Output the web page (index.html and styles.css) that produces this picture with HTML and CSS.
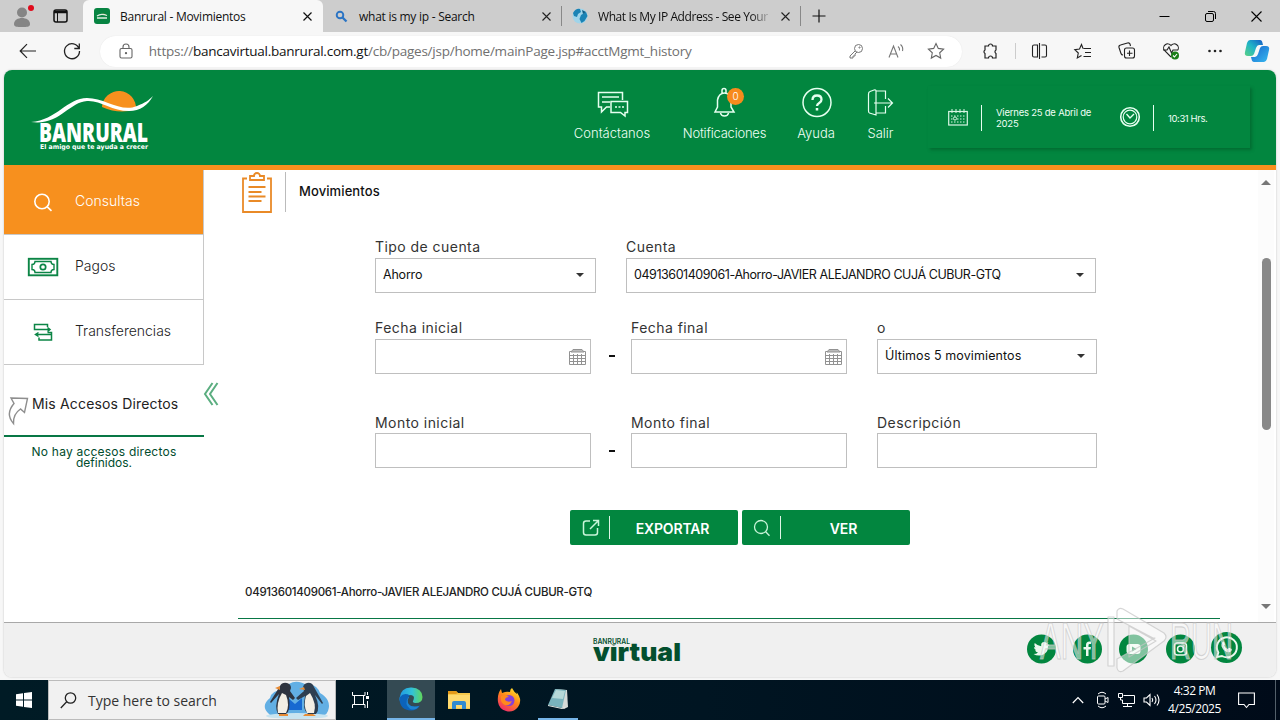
FILE: index.html
```html
<!DOCTYPE html>
<html lang="es">
<head>
    <meta charset="UTF-8">
    <meta name="viewport" content="width=device-width, initial-scale=1.0">
    <title>Banrural - Movimientos</title>
    <link rel="stylesheet" href="styles.css">
</head>
<body>

<!-- tabs -->
<div class="tab-strip">
    <div class="strip-tools">
        <svg width="24" height="26" viewBox="0 0 24 26"><circle cx="12" cy="9.500" r="5" fill="#858585"/><path d="M4 21c0-8 16-8 16 0 0 3-3 3-8 3s-8 0-8-3z" fill="#858585"/><circle cx="21" cy="5" r="3" fill="#e00b1c"/></svg>
        <svg class="work-icon" width="15" height="14" viewBox="0 0 15 14" fill="none" stroke="#111"><rect x="1" y="1" width="13" height="12" rx="2" stroke-width="1.500"/><path d="M1 3h13" stroke-width="2.500"/><path d="M4.500 3v10"/></svg>
    </div>
    <div class="tab active">
        <svg class="favicon" width="16" height="16" viewBox="0 0 16 16"><rect width="16" height="16" rx="3" fill="#078442"/><path d="M7 7a3 3 0 0 1 5 0z" fill="#f7901e"/><path d="M3 8q4-3 10-.5M3 10h10" stroke="#dfeee2" stroke-width="1.300" fill="none"/></svg>
        <span class="tab-title t1">Banrural - Movimientos</span>
        <svg class="tab-close" width="9" height="9" viewBox="0 0 9 9"><path d="M.5.500l8 8M8.500.500l-8 8" stroke="#111" stroke-width="1.200"/></svg>
    </div>
    <div class="tab">
        <svg class="favicon" width="16" height="16" viewBox="0 0 16 16" fill="none" stroke="#2b74c4"><circle cx="7" cy="7" r="3.300" stroke-width="1.900"/><path d="M9.500 9.500l4 4" stroke-width="2.300"/></svg>
        <span class="tab-title t2">what is my ip - Search</span>
        <svg class="tab-close" width="9" height="9" viewBox="0 0 9 9"><path d="M.5.500l8 8M8.500.500l-8 8" stroke="#222" stroke-width="1.100"/></svg>
    </div>
    <div class="tab">
        <svg class="favicon" width="16" height="16" viewBox="0 0 16 16"><circle cx="8" cy="8" r="7.500" fill="#9fd4ea"/><path d="M1 5q3-5 7-4l1 3-3 2-1 3-3-1zM9 7l5-3 1.500 4-3 5-3 2-2-4z" fill="#1b83b5"/><path d="M10 2l4 2-3 2z" fill="#0f5d86"/></svg>
        <span class="tab-title t3">What Is My IP Address - See Your</span>
        <svg class="tab-close" width="9" height="9" viewBox="0 0 9 9"><path d="M.5.500l8 8M8.500.500l-8 8" stroke="#222" stroke-width="1.100"/></svg>
    </div>
    <svg class="new-tab" width="14" height="14" viewBox="0 0 14 14"><path d="M7 .5v13M.5 7h13" stroke="#111" stroke-width="1.200"/></svg>
    <div class="window-buttons">
        <svg width="11" height="11" viewBox="0 0 11 11"><path d="M.5 5.500h10" stroke="#000"/></svg>
        <svg width="11" height="11" viewBox="0 0 11 11" fill="none" stroke="#000"><rect x=".5" y="2.500" width="8" height="8" rx="1.500"/><path d="M3 .5h5.500q2 0 2 2V8"/></svg>
        <svg width="11" height="11" viewBox="0 0 11 11"><path d="M.5.500l10 10M10.500.500l-10 10" stroke="#000" stroke-width="1.100"/></svg>
    </div>
</div>

<!-- address bar -->
<div class="toolbar">
    <div class="nav-buttons">
        <svg width="18" height="16" viewBox="0 0 18 16" fill="none" stroke="#222" stroke-width="1.200"><path d="M17 8H1.500M8 1.200L1.200 8 8 14.800"/></svg>
        <svg width="18" height="18" viewBox="0 0 18 18" fill="none" stroke="#222" stroke-width="1.300"><path d="M16 6.500A7.500 7.500 0 1 0 16.500 9M16.300 1.500v5h-5"/></svg>
    </div>
    <div class="address">
        <svg class="lock" width="14" height="16" viewBox="0 0 14 16" fill="none" stroke="#666" stroke-width="1.100"><rect x="1" y="5.500" width="12" height="9.500" rx="1.500"/><path d="M4 5.500V4a3 3 0 0 1 6 0v1.500"/><circle cx="7" cy="10.200" r=".6" fill="#666"/></svg>
        <span class="url">https://<b>bancavirtual.banrural.com.gt</b>/cb/pages/jsp/home/mainPage.jsp#acctMgmt_history</span>
        <div class="address-icons">
            <svg width="16" height="16" viewBox="0 0 16 16" fill="none" stroke="#777"><circle cx="10.500" cy="5.500" r="4"/><circle cx="11.500" cy="4.500" r=".6"/><path d="M7 8l-5 5v2h3v-2h2v-2l2-2"/></svg>
            <svg width="16" height="16" viewBox="0 0 16 16" fill="none" stroke="#777" stroke-width="1.100"><path d="M1 14.500L5.500 3 10 14.500M2.500 11h6M10 3.500q2 1.500 1.500 4M12.500 1.500q3 2.500 2 6.500"/></svg>
            <svg width="18" height="18" viewBox="0 0 18 18" fill="none" stroke="#666" stroke-width="1.100"><path d="M9 1.500l2.300 4.900 5.300.7-3.900 3.700 1 5.300L9 13.500l-4.700 2.600 1-5.300-3.900-3.700 5.300-.7z"/></svg>
        </div>
    </div>
    <svg class="ext" width="17" height="17" viewBox="0 0 17 17" fill="none" stroke="#222" stroke-width="1.200"><path d="M3 3h3.500a2 2 0 0 1 4 0H14v4a2 2 0 0 0 0 3.500V15h-3.500a2 2 0 0 0-4 0H3v-4.500a2 2 0 0 1 0-3.500z"/></svg>
    <div class="toolbar-sep"></div>
    <div class="toolbar-icons">
        <svg width="17" height="16" viewBox="0 0 17 16" fill="none" stroke="#222" stroke-width="1.100"><path d="M6.500 2H3Q1.500 2 1.500 3.500v9Q1.500 14 3 14h3.500zM8.500 0v16M10.500 2H14q1.500 0 1.500 1.500v9q0 1.500-1.500 1.500h-3.500"/></svg>
        <svg width="18" height="17" viewBox="0 0 18 17" fill="none" stroke="#222" stroke-width="1.100"><path d="M9 5.500L7.500 1.500l-2 4.500-4.700.6 3.500 3.400-1 5 4.200-2.500M9.500 5.500H17M11 9.500h6M9.500 13.500H17"/></svg>
        <svg width="18" height="18" viewBox="0 0 18 18" fill="none" stroke="#222" stroke-width="1.100"><rect x="6.500" y="6" width="10" height="10" rx="2"/><path d="M11.500 8.500v5.500M9 11.200h5.500M5 13q-1.500 0-2-1.500l-2-6Q.5 3.500 2.500 3l7-2q2-.5 2.500 1l.5 2"/></svg>
        <svg width="18" height="18" viewBox="0 0 18 18" fill="none" stroke="#222" stroke-width="1.100"><path d="M9 15L2.500 8.500a4 4 0 0 1 6.500-5 4 4 0 0 1 6.500 5M1 8h4l2-3 2.500 6L11 8h5"/><circle cx="13" cy="13.500" r="4" fill="#1b7d18" stroke="none"/><path d="M11 13.500l1.500 1.500 2.500-3" stroke="#fff"/></svg>
        <svg width="16" height="6" viewBox="0 0 16 6" fill="#222"><circle cx="2.500" cy="3" r="1.300"/><circle cx="8" cy="3" r="1.300"/><circle cx="13.500" cy="3" r="1.300"/></svg>
        <svg width="26" height="24" viewBox="0 0 26 24"><defs><linearGradient id="cpA" x1="0" y1="1" x2="1" y2="0"><stop offset="0" stop-color="#5ad184"/><stop offset=".5" stop-color="#20b4c7"/><stop offset="1" stop-color="#1659c5"/></linearGradient><linearGradient id="cpB" x1="0" y1="0" x2="1" y2="1"><stop offset="0" stop-color="#1863cc"/><stop offset="1" stop-color="#37baf0"/></linearGradient></defs><path d="M6 1h10q2 0 2.500 3L19 6h-4q-2 0-3 3l-2 6q-1 2-3 2H4q-4 0-3-4L3 4q1-3 3-3z" fill="url(#cpA)"/><path d="M20 23H10q-2 0-2.500-3L7 18h4q2 0 3-3l2-6q1-2 3-2h3q4 0 3 4l-2 9q-1 3-3 3z" fill="url(#cpB)"/></svg>
    </div>
</div>

<!-- page -->
<div class="page">
    <header class="header">
        <svg class="brand" width="124" height="65" viewBox="0 0 124 65">
            <path d="M71 19a17 17 0 0 1 34 2q-16 6-34-2z" fill="#f7901e"/>
            <path d="M0 34C26 32 36 10 56 10c18 0 34 15 50 8 8-3 12-6 16-10-5 9-13 15-24 15-17 0-29-11-42-10C38 14 28 38 0 34z" fill="#fff"/>
            <text class="brand-name" x="8" y="54" textLength="109" lengthAdjust="spacingAndGlyphs">BANRURAL</text>
            <text class="brand-slogan" x="9" y="61" textLength="108" lengthAdjust="spacingAndGlyphs">El amigo que te ayuda a crecer</text>
        </svg>
        <nav class="top-nav">
            <a class="nav-contact">
                <svg width="32" height="32" viewBox="0 0 32 32" fill="none" stroke="#e6fff0" stroke-width="1.500"><path d="M13 20H9.500l-5 5v-5H1.500V5.500h24V13M5 10h17M5 15h8"/><path d="M14 14.500h16.500v11H28v3.500l-4.500-3.500H14z"/><path d="M18 20h2M21.500 20h2M25 20h2"/></svg>
                <span>Contáctanos</span>
            </a>
            <a class="nav-notif">
                <svg width="28" height="32" viewBox="0 0 28 32" fill="none" stroke="#e6fff0" stroke-width="1.500"><path d="M11 6V3.500a2 2 0 0 1 4 0V6M4 25h19l-3-5v-7q-1-7-6.500-7T6.500 13v7zM9.500 26q.5 3 4 3t4-3"/></svg>
                <span>Notificaciones</span>
                <i class="notif-count">0</i>
            </a>
            <a class="nav-help">
                <svg width="32" height="32" viewBox="0 0 32 32" fill="none" stroke="#e6fff0"><circle cx="16" cy="15.500" r="14" stroke-width="1.500"/><path d="M11.500 13q0-4.500 4.500-4.500t4.500 4q0 2-2 3.200-2.500 1.500-2.500 3.300" stroke-width="2.300"/><path d="M16 21v2.500" stroke-width="2.500"/></svg>
                <span>Ayuda</span>
            </a>
            <a class="nav-exit">
                <svg width="28" height="32" viewBox="0 0 28 32" fill="none" stroke="#e6fff0" stroke-width="1.200"><path d="M9 4h9.500v8M18.500 19v7H9M9 4v24L2.500 26Q1.500 25.500 1.500 24V7q0-2 1.500-2.500L7 3q2-.5 2 1zM7 16h18.500M21 11.500l4.500 4.500-4.500 4.500"/></svg>
                <span>Salir</span>
            </a>
        </nav>
        <div class="date-box">
            <svg width="20" height="17" viewBox="0 0 20 17" fill="none" stroke="#d9f6e4"><rect x=".7" y="2.500" width="18.600" height="13.500" stroke-width="1.200"/><path d="M4 0v4M8 0v4M12 0v4M16 0v4"/><path d="M3 7h14M3 10h14M3 13h14" stroke-dasharray="1.500 1.500"/><circle cx="7" cy="9.500" r="1.600" fill="#02863f"/></svg>
            <div class="date-sep"></div>
            <div class="date-text">Viernes 25 de Abril de<br>2025</div>
            <svg class="clock" width="22" height="22" viewBox="0 0 22 22" fill="none" stroke="#e6fff0"><circle cx="11" cy="11" r="9.300" stroke-width="1.600"/><circle cx="11" cy="11" r="6.800" stroke-width="1.200"/><path d="M7.500 8l3.500 4 4-4" stroke-width="1.400"/></svg>
            <div class="date-sep"></div>
            <div class="time-text">10:31 Hrs.</div>
        </div>
    </header>

    <div class="main">
        <aside class="sidebar">
            <div class="menu-item selected">
                <svg width="40" height="24" viewBox="0 0 40 24" fill="none" stroke="#fff" stroke-width="1.600"><circle cx="19" cy="11.500" r="7.200"/><path d="M24.300 16.800l4.200 4"/></svg>
                <span>Consultas</span>
            </div>
            <div class="menu-item">
                <svg width="40" height="24" viewBox="0 0 40 24" fill="none" stroke="#0c8546"><rect x="5.800" y="3.800" width="28.500" height="16.500" stroke-width="1.900"/><path d="M12 6.500h16q0 3 3 3v5q-3 0-3 3H12q0-3-3-3v-5q3 0 3-3z" stroke-width="1.400"/><circle cx="20" cy="12" r="2.700" stroke-width="1.700"/></svg>
                <span>Pagos</span>
            </div>
            <div class="menu-item">
                <svg width="40" height="24" viewBox="0 0 40 24" fill="none" stroke="#0c8546" stroke-width="1.500"><path d="M15 9.500H11.500V4.500h13v2.500M15 9.500h12M24.500 7.500l2.500 2-2.500 2M24.500 12.500H28.500v7.500H16v-2.500M28 14.500H12.500M15.500 12.500l-3 2 3 2"/></svg>
                <span>Transferencias</span>
            </div>
            <div class="shortcuts">
                <svg width="23" height="29" viewBox="0 0 23 29" fill="none" stroke="#8e8e8e" stroke-width="1.400"><path d="M4 2l16.500.5-3 14-4-3.500Q6 18 6.500 27.500-2 18 7 7.500z"/></svg>
                <span>Mis Accesos Directos</span>
            </div>
            <p class="no-shortcuts"><span>No hay accesos directos</span><br>definidos.</p>
        </aside>
        <div class="collapse">
            <svg width="16" height="24" viewBox="0 0 16 24" fill="none" stroke="#5bae80" stroke-width="2"><path d="M8.500 1L1 12l7.500 11M13.500 1L6 12l7.500 11"/></svg>
        </div>

        <section class="content">
            <div class="title-row">
                <svg width="30" height="42" viewBox="0 0 30 42" fill="none" stroke="#e98a27" stroke-width="1.800"><path d="M5 6.500H1v33.500h28V6.500h-4"/><path d="M8 8h14V4h-4a3 3 0 0 0-6 0H8zM6.500 15h17M6.500 20h13M6.500 24.500h17M6.500 29h13"/></svg>
                <h1>Movimientos</h1>
            </div>

            <div class="filters">
                <div class="row">
                    <div class="field type"><label>Tipo de cuenta</label><div class="box select"><span class="v1">Ahorro</span></div></div>
                    <div class="field account"><label>Cuenta</label><div class="box select"><span class="v2">04913601409061-Ahorro-JAVIER ALEJANDRO CUJÁ CUBUR-GTQ</span></div></div>
                </div>
                <div class="row dates">
                    <div class="field half"><label>Fecha inicial</label><div class="box"><svg class="cal" width="17" height="18" viewBox="0 0 17 18" fill="none" stroke="#929292"><path d="M.5 3.500h16v13H.5zM.5 7.500h16M.5 10.500h16M.5 13.500h16M4.500 6v10.500M8.500 6v10.500M12.500 6v10.500"/><path d="M4 1.500h9L15 4H2z" fill="#bbb"/></svg></div></div>
                    <div class="dash"></div>
                    <div class="field half"><label>Fecha final</label><div class="box"><svg class="cal" width="17" height="18" viewBox="0 0 17 18" fill="none" stroke="#929292"><path d="M.5 3.500h16v13H.5zM.5 7.500h16M.5 10.500h16M.5 13.500h16M4.500 6v10.500M8.500 6v10.500M12.500 6v10.500"/><path d="M4 1.500h9L15 4H2z" fill="#bbb"/></svg></div></div>
                    <div class="field last"><label>o</label><div class="box select"><span class="v3">Últimos 5 movimientos</span></div></div>
                </div>
                <div class="row amounts">
                    <div class="field half"><label>Monto inicial</label><div class="box"></div></div>
                    <div class="dash"></div>
                    <div class="field half"><label>Monto final</label><div class="box"></div></div>
                    <div class="field last"><label>Descripción</label><div class="box"></div></div>
                </div>
            </div>

            <div class="buttons">
                <button class="btn">
                    <svg width="18" height="18" viewBox="0 0 18 18" fill="none" stroke="#c9f5d9" stroke-width="1.500"><path d="M8 2H4Q1.500 2 1.500 4.500v9Q1.500 16 4 16h9q2.500 0 2.500-2.500V9M8 10l8-8M11 1.500h5.500V7"/></svg>
                    <span class="btn-text">EXPORTAR</span>
                </button>
                <button class="btn">
                    <svg width="18" height="18" viewBox="0 0 18 18" fill="none" stroke="#c9f5d9" stroke-width="1.300"><circle cx="8" cy="8" r="6.500"/><path d="M12.700 12.700l3.800 4"/></svg>
                    <span class="btn-text">VER</span>
                </button>
            </div>

            <h2 class="account-title">04913601409061-Ahorro-JAVIER ALEJANDRO CUJÁ CUBUR-GTQ</h2>
        </section>

        <div class="scrollbar">
            <div class="arrow-up"></div>
            <div class="thumb"></div>
            <div class="arrow-down"></div>
        </div>
    </div>

    <footer class="footer">
        <svg class="virtual" width="90" height="34" viewBox="0 0 90 34" fill="#034f2e"><text class="virtual-name" x="1" y="24" textLength="88" lengthAdjust="spacingAndGlyphs">virtual</text><path d="M0 0h38.500v7.500H0z" fill="#f0f0f0"/><text class="virtual-top" x="1" y="6.500" textLength="37" lengthAdjust="spacingAndGlyphs">BANRURAL</text></svg>
        <div class="social">
            <svg width="31" height="32" viewBox="0 0 31 32"><circle cx="15.500" cy="17" r="14.500" fill="#02863f"/><path d="M23.500 13q-1 .8-1.500 1 .3 8-7.500 9.500-4 .5-7-1.500 3 0 4.500-1.500-2.300-.4-3-2.300h1.300Q8 17.300 8 15l1.400.4Q7.500 13.500 8.700 11q3 3 6.500 3.200-.5-4.200 3-4.200 1.300 0 2.300 1l2-.7-1.200 1.700z" fill="#ecf8ef"/></svg>
            <svg width="31" height="32" viewBox="0 0 31 32"><circle cx="15.500" cy="17" r="14.500" fill="#02863f"/><path d="M14 24v-6.500h-2.500V15H14v-2q0-3.500 3.500-3.500H19v2.500h-1.300q-1.200 0-1.200 1.300V15H19l-.4 2.500h-2.100V24z" fill="#ecf8ef"/></svg>
            <svg width="31" height="32" viewBox="0 0 31 32"><circle cx="15.500" cy="17" r="14.500" fill="#02863f"/><rect x="8.500" y="12" width="14" height="10" rx="3" fill="#ecf8ef"/><path d="M14 14.500l4.500 2.500-4.500 2.500z" fill="#02863f"/></svg>
            <svg width="31" height="32" viewBox="0 0 31 32" fill="none" stroke="#ecf8ef" stroke-width="1.500"><circle cx="15.500" cy="17" r="14.500" fill="#02863f" stroke="none"/><rect x="9.500" y="11" width="12" height="12" rx="3"/><circle cx="15.500" cy="17" r="3"/><path d="M18.500 13.500h1"/></svg>
            <svg width="31" height="32" viewBox="0 0 31 32"><circle cx="15.500" cy="15.500" r="15.500" fill="#02863f"/><path d="M6 25l1.300-4.600A10 10 0 1 1 11 24z" fill="none" stroke="#ecf8ef" stroke-width="2"/><path d="M11.500 10q1.200-1 2 .5l.7 1.800-1 1.400q1.200 2.300 3.500 3.300l1.400-1.300 2.600 1.300q.3 3-3 3.300-5-.6-7.200-6-.4-2.600 1-4.300z" fill="#ecf8ef"/></svg>
        </div>
    </footer>
</div>

<svg class="watermark" width="200" height="68" viewBox="0 0 200 68">
    <g fill="#fff" fill-opacity=".5" stroke="#c4c4c4" stroke-opacity=".7" stroke-width="1.200">
        <text x="2" y="52" textLength="64" lengthAdjust="spacingAndGlyphs">ANY</text>
        <text x="132" y="52" textLength="63" lengthAdjust="spacingAndGlyphs">RUN</text>
        <path d="M70 10h6v49h-6zM79 4q2-4 6-2l41 24q4 4 0 8L85 64q-5 2-6-3V52l38-21-2 0-36-19zM91 19l27 15-27 16z" stroke-linejoin="round"/>
    </g>
</svg>

<!-- taskbar -->
<div class="taskbar">
    <div class="start">
        <svg width="16" height="16" viewBox="0 0 16 16" fill="#fff"><path d="M0 2.200l7-1v6.300H0zM8 1l8-1v7.500H8zM0 8.500h7v6.300l-7-1zM8 8.500h8V16l-8-1z"/></svg>
    </div>
    <div class="search">
        <svg width="17" height="17" viewBox="0 0 17 17" fill="none" stroke="#222" stroke-width="1.300"><circle cx="10.500" cy="6" r="5.200"/><path d="M6.700 9.800L.8 16"/></svg>
        <span>Type here to search</span>
        <svg class="penguins" width="68" height="38" viewBox="0 0 68 38">
            <path d="M6 33Q-3 25 7 17q2-8 13-8Q30-5 45 5q8-3 12 7 12 7 8 18-2 6-12 6H13q-5 0-7-3z" fill="#62afe4"/>
            <ellipse cx="34" cy="35" rx="31" ry="3" fill="#c8e4f0"/>
            <path d="M25 17l7 6 7-6v12H25z" fill="#1769d1"/>
            <path d="M17 5q2-4 7-3 4 1 4 5l-1 3 5 7-2 2-4-3q2 14-3 17h-8q-4-7 1-20l-8 9-1-1z" fill="#2e3440"/>
            <path d="M19 12l4 2q4 10 0 18h-8q-2-10 4-20z" fill="#f3eee4"/>
            <path d="M51 6q-2-5-7-4-4 1-4 5l1 3-8 7 2 2 7-4q-3 14 3 18h8q5-6-1-19l7 9 1-1z" fill="#2e3e50"/>
            <path d="M47 12l-4 3q-3 9 1 17h7q3-9-4-20z" fill="#f3eee4"/>
            <path d="M17 5l-5 2 5 2zM16 33h9v2h-9zM42 33h8l3 2H40zM41 6l-5 2 6 1z" fill="#e78b34"/>
        </svg>
    </div>
    <div class="task-cell view">
        <svg width="18" height="16" viewBox="0 0 18 16" fill="none" stroke="#fff"><path d="M2.500 3.500h9v9h-9zM.5 0v3.500h12.500V0M.5 16v-3.500h12.500V16M15.500 0v3M15.500 9v7"/><path d="M14 4h3v3h-3z" fill="#fff" stroke="none"/></svg>
    </div>
    <div class="task-cell edge">
        <svg width="24" height="24" viewBox="0 0 24 24"><defs><linearGradient id="edgeA"><stop offset="0" stop-color="#209ae4"/><stop offset=".55" stop-color="#32c2d7"/><stop offset="1" stop-color="#61d75a"/></linearGradient></defs><path d="M.5 11Q2 0 12.500.500 23 1 23.500 10q0 6-7 6-4-.5-2-3 2-5-4-5Q2 8 .5 14z" fill="url(#edgeA)"/><path d="M1 10q4-5 10-1.500Q6 12 9.500 17q4 4.500 11.500 1.500-3 5-9 5Q1 23 .5 12z" fill="#0c63ba"/><path d="M9 10q-4 7 2 12 6 2 9-3-9 2-11-3-1-3 1-6z" fill="#1d83d2"/></svg>
    </div>
    <div class="task-cell folder">
        <svg width="22" height="20" viewBox="0 0 22 20"><path d="M0 1h8l2 2h12v16H0z" fill="#f7c94c"/><path d="M0 1h8l2 2-2 1H0z" fill="#e49a19"/><path d="M0 5h22v13H0z" fill="#ffda6e"/><path d="M4 19v-6q0-2 2-2h10q2 0 2 2v6h-4v-4H8v4z" fill="#318bd0"/></svg>
    </div>
    <div class="task-cell firefox">
        <svg width="24" height="24" viewBox="0 0 24 24"><defs><linearGradient id="ffA" x1=".8" y1="0" x2=".2" y2="1"><stop offset="0" stop-color="#ffe32e"/><stop offset=".45" stop-color="#ff8818"/><stop offset="1" stop-color="#f02471"/></linearGradient></defs><path d="M1 14Q0 6 4 1l1 4 3-1q2-.5 5 0 0-3 2-4 2 4 5 6 0-1-.5-2Q26 12 21 19q-5 6-12 4-7-2-8-9z" fill="url(#ffA)"/><circle cx="12" cy="12.500" r="5.500" fill="#8540d8"/><path d="M4 8q5-2 8 1-4 0-4 3 3 3 7 1-2 5-7 4-5-2-4-9z" fill="#ff8a1c"/></svg>
    </div>
    <div class="task-cell notes">
        <svg width="24" height="24" viewBox="0 0 24 24"><path d="M9 2l12 1 1 17-4 2-3-2z" fill="#d5dad7"/><path d="M9 2l11 1-4 18-14-3z" fill="#79b3bc"/><path d="M10 3l9 1-2 8-11-1z" fill="#b6d9d8"/><path d="M2 18l14 3 3-1v1l-3 1-14-3z" fill="#e4e9e5"/></svg>
    </div>
    <div class="tray">
        <svg width="12" height="8" viewBox="0 0 12 8" fill="none" stroke="#fff" stroke-width="1.200"><path d="M.8 7L6 1.500 11.200 7"/></svg>
        <svg width="14" height="18" viewBox="0 0 14 18" fill="none" stroke="#fff"><rect x="1.500" y="5" width="7.500" height="8" rx="1"/><path d="M9 8l3-1.500v5L9 10M2 3q4-3.500 8 0M2 15q4 3.500 8 0"/></svg>
        <svg width="17" height="16" viewBox="0 0 17 16" fill="none" stroke="#fff"><path d="M5.500 3.500h11v8h-12V8M9.500 11.500v3M5 14.500h9M.5 1.500h4v4h-4zM2.500 5.500V8h2"/></svg>
        <svg width="17" height="14" viewBox="0 0 17 14" fill="none" stroke="#fff" stroke-width="1.100"><path d="M1 5h2.500L7 1.500v11L3.500 9H1zM9 5q1.500 2 0 4M11.500 3q3 4 0 8M14 1.500q4 5.500 0 11"/></svg>
    </div>
    <div class="tray-clock">4:32 PM<br>4/25/2025</div>
    <svg class="action" width="17" height="17" viewBox="0 0 17 17" fill="none" stroke="#fff" stroke-width="1.100"><path d="M.6 1h15.800v11.500H11l-2.500 3-2.500-3H.6z"/></svg>
    <div class="peek"></div>
</div>

</body>
</html>
```
FILE: styles.css
```css
* {
    box-sizing: border-box;
}

body {
    margin: 0;
    width: 1280px;
    height: 720px;
    overflow: hidden;
    background-color: #f7f7f7;
    font-family: Inter, "Liberation Sans", sans-serif;
    font-size: 13px;
    color: #222;
}

svg {
    display: block;
    flex-shrink: 0;
    overflow: visible;
}

/* browser tabs */
.tab-strip {
    height: 32px;
    display: flex;
    align-items: center;
    background-color: #cdcdcd;
    font-family: "Open Sans", "Noto Sans", sans-serif;
    font-size: 12px;
    color: #111;
}

.strip-tools {
    width: 83px;
    display: flex;
    align-items: center;
    padding-left: 10px;
}

.work-icon {
    margin-left: 19px;
}

.tab {
    width: 239px;
    height: 32px;
    display: flex;
    align-items: center;
    padding: 0 11px 0 10px;
    position: relative;
}

.tab.active {
    width: 240px;
    padding-left: 11px;
    background-color: #f7f7f7;
    border-radius: 6px 6px 0 0;
}

.tab:not(.active)::after {
    content: "";
    position: absolute;
    right: 0;
    top: 6px;
    height: 20px;
    border-right: 1px solid #888;
}

.tab-title {
    margin-left: 10px;
    letter-spacing: -0.26px;
    white-space: nowrap;
}

.t3 {
    width: 174px;
    overflow: hidden;
    letter-spacing: -0.42px;
    -webkit-mask-image: linear-gradient(90deg, #000 88%, transparent);
    mask-image: linear-gradient(90deg, #000 88%, transparent);
}

.tab-close {
    margin-left: auto;
}

.new-tab {
    margin-left: 11px;
}

.window-buttons {
    display: flex;
    gap: 35px;
    margin-left: auto;
    margin-right: 18px;
}

/* toolbar */
.toolbar {
    height: 38px;
    display: flex;
    align-items: center;
}

.nav-buttons {
    width: 100px;
    display: flex;
    align-items: center;
    gap: 26px;
    padding-left: 19px;
}

.address {
    width: 864px;
    height: 31px;
    border-radius: 16px;
    background-color: #fff;
    display: flex;
    align-items: center;
    padding: 0 5px 0 19px;
    box-shadow: 0 0 1px #ddd;
}

.url {
    margin-left: 16px;
    font-family: "Open Sans", "Noto Sans", sans-serif;
    font-size: 13.5px;
    letter-spacing: -0.24px;
    color: #707070;
    white-space: nowrap;
}

.url b {
    font-weight: 400;
    color: #111;
}

.address-icons {
    margin-left: auto;
    display: flex;
    align-items: center;
    width: 120px;
    justify-content: space-around;
}

.ext {
    margin-left: 20px;
}

.toolbar-sep {
    width: 1px;
    height: 16px;
    margin: 0 1px 0 16px;
    background-color: #ccc;
}

.toolbar-icons {
    display: flex;
    align-items: center;
    width: 264px;
}

.toolbar-icons svg {
    margin: 0 13px;
}

.toolbar-icons svg:first-child {
    margin-left: 14px;
}

.toolbar-icons svg:nth-child(5) {
    margin: 0 14px;
}

.toolbar-icons svg:last-child {
    margin: 0 0 0 7px;
}

/* page */
.page {
    margin: 0 4px;
    height: 607px;
    border-radius: 8px;
    overflow: hidden;
    background-color: #fff;
    box-shadow: 0 0 2px #bbb;
}

.header {
    height: 100px;
    display: flex;
    background-color: #02863f;
    border-bottom: 5px solid #f7901e;
    color: #effff5;
}

.brand {
    margin: 18px 0 0 27px;
}

.brand-name {
    font-family: "Open Sans", sans-serif;
    font-weight: 800;
    font-size: 26px;
    fill: #fff;
}

.brand-slogan {
    font-family: "DejaVu Sans", sans-serif;
    font-weight: 700;
    font-size: 6.5px;
    fill: #fff;
}

.top-nav {
    display: flex;
    margin-left: 413px;
    padding-top: 17px;
}

.top-nav a {
    display: flex;
    flex-direction: column;
    align-items: center;
    gap: 6px;
    font-size: 13px;
    font-weight: 300;
    line-height: 17px;
    position: relative;
}

.top-nav svg {
    margin-left: 1px;
}

.nav-contact {
    width: 88px;
}

.nav-notif {
    width: 137px;
    letter-spacing: -0.22px;
}

.nav-help {
    width: 46px;
}

.nav-exit {
    width: 82px;
    padding-left: 1px;
}

.notif-count {
    position: absolute;
    left: 71px;
    top: 1px;
    width: 17px;
    height: 17px;
    border-radius: 50%;
    background-color: #f78b1d;
    color: #fff;
    font-style: normal;
    font-size: 10px;
    text-align: center;
}

.date-box {
    width: 322px;
    height: 62px;
    margin: 16px 0 0 7px;
    padding-left: 20px;
    display: flex;
    align-items: center;
    box-shadow: 2px 2px 3px rgba(0, 60, 25, 0.35);
    font-size: 9.5px;
    line-height: 11px;
    letter-spacing: -0.22px;
    white-space: nowrap;
}

.date-sep {
    width: 1px;
    height: 26px;
    margin: 2px 14px 0 13px;
    background-color: #e6fff0;
}

.date-text {
    width: 123px;
    padding-top: 2px;
}

.clock + .date-sep {
    margin-left: 12px;
}

.time-text {
    padding-top: 2px;
    letter-spacing: -0.4px;
}

.main {
    height: 452px;
    display: flex;
}

/* sidebar */
.sidebar {
    width: 200px;
}

.menu-item {
    height: 65px;
    display: flex;
    align-items: center;
    padding-left: 20px;
    border-right: 1px solid #c8c8c8;
    border-bottom: 1px solid #c8c8c8;
    font-size: 14px;
    font-weight: 300;
    color: #222;
}

.menu-item svg {
    margin-left: -1px;
}

.menu-item span {
    margin-left: 12px;
    padding-bottom: 4px;
}

.menu-item.selected {
    background-color: #f7901e;
    color: #fff;
}

.shortcuts {
    height: 72px;
    display: flex;
    align-items: center;
    padding: 11px 0 0 3px;
    border-bottom: 2px solid #087745;
    white-space: nowrap;
    font-size: 14px;
    letter-spacing: 0.16px;
}

.shortcuts svg {
    margin-top: 9px;
}

.shortcuts span {
    margin-left: 2px;
    padding-bottom: 4px;
}

.no-shortcuts {
    margin: 9px 0 0;
    font-size: 12px;
    line-height: 11px;
    color: #004b2d;
    text-align: center;
}

.no-shortcuts span {
    letter-spacing: 0.22px;
}

.collapse {
    width: 34px;
    padding-top: 212px;
}

/* form */
.content {
    width: 1020px;
}

.title-row {
    display: flex;
    height: 43px;
    padding: 1px 0 0 3px;
}

.title-row svg {
    margin: 1px 0 0 1px;
}

.title-row h1 {
    margin: 1px 0 0 13px;
    padding-left: 13px;
    height: 40px;
    border-left: 1px solid #bbb;
    font-size: 13px;
    font-weight: 500;
    line-height: 38px;
    letter-spacing: 0.1px;
    color: #111;
}

.filters {
    margin: 24px 0 0 137px;
}

.row {
    display: flex;
}

.dates {
    margin-top: 25px;
}

.amounts {
    margin-top: 39px;
}

.field label {
    display: block;
    height: 21px;
    font-size: 14px;
    line-height: 20px;
    letter-spacing: 0.45px;
    color: #333;
    white-space: nowrap;
}

.amounts .field label {
    height: 20px;
}

.box {
    height: 35px;
    display: flex;
    align-items: center;
    border: 1px solid #bfbfbf;
    background-color: #fff;
    color: #111;
    font-size: 12.5px;
    white-space: nowrap;
}

.select {
    padding: 0 11px 2px 7px;
}

.select::after {
    content: "";
    margin-left: auto;
    border: 4.5px solid transparent;
    border-top-color: #333;
    border-bottom: 0;
}

.v1 {
    letter-spacing: -0.2px;
}

.v2 {
    letter-spacing: -0.44px;
}

.v3 {
    letter-spacing: 0.1px;
}

.type {
    width: 221px;
    margin-right: 30px;
}

.account {
    width: 470px;
}

.half {
    width: 216px;
}

.last {
    width: 220px;
    margin-left: 30px;
}

.dash {
    width: 6px;
    height: 2px;
    margin: 37px 16px 0 18px;
    background-color: #111;
}

.cal {
    margin: 0 4px 0 auto;
}

.buttons {
    display: flex;
    gap: 4px;
    margin: 42px 0 0 332px;
}

.btn {
    width: 168px;
    height: 35px;
    display: flex;
    align-items: center;
    padding: 0 0 0 12px;
    border: 0;
    border-radius: 2px;
    background-color: #02863f;
    color: #fff;
    font-family: inherit;
    cursor: pointer;
}

.btn-text {
    width: 126px;
    height: 23px;
    margin-left: 9px;
    border-left: 1px solid #dff5e6;
    font-size: 14px;
    font-weight: 600;
    line-height: 26px;
    letter-spacing: -0.15px;
    text-align: center;
}

.btn + .btn {
    padding-left: 11px;
}

.account-title {
    width: 982px;
    height: 74px;
    margin: 0;
    padding: 37px 0 0 7px;
    border-bottom: 1px solid #087745;
    font-size: 11.5px;
    font-weight: 500;
    line-height: 20px;
    letter-spacing: -0.29px;
    color: #222;
    white-space: nowrap;
}

/* scrollbar */
.scrollbar {
    width: 16px;
    display: flex;
    flex-direction: column;
    align-items: center;
    background-color: #fcfcfc;
    padding: 10px 0 13px;
}

.arrow-up {
    border: 5px solid transparent;
    border-top: 0;
    border-bottom-color: #777;
}

.arrow-down {
    margin-top: auto;
    border: 5px solid transparent;
    border-bottom: 0;
    border-top-color: #777;
}

.thumb {
    width: 9px;
    height: 172px;
    margin-top: 73px;
    border-radius: 5px;
    background-color: #888;
}

/* footer */
.footer {
    height: 55px;
    display: flex;
    background-color: #f0f0f0;
    border-top: 1px solid #a8a8a8;
}

.virtual {
    margin: 14px 0 0 588px;
}

.virtual-top {
    font-size: 7px;
    font-weight: 600;
}

.virtual-name {
    font-size: 25px;
    font-weight: 900;
}

.social {
    display: flex;
    gap: 15.2px;
    margin: 9px 0 0 344px;
}

.watermark {
    position: absolute;
    left: 1038px;
    top: 607px;
    font-family: "Liberation Sans", sans-serif;
    font-size: 51px;
}

/* windows taskbar */
.taskbar {
    height: 40px;
    margin-top: 3px;
    display: flex;
    background: linear-gradient(90deg, #001b25, #001522 55%, #000b19);
    color: #fff;
    font-family: "Open Sans", "Noto Sans", sans-serif;
}

.start {
    width: 48px;
    display: flex;
    align-items: center;
    justify-content: center;
}

.search {
    width: 288px;
    display: flex;
    align-items: center;
    padding-left: 11px;
    border: 1px solid #bbb;
    background-color: #f1f1f1;
    color: #333;
    font-size: 14px;
}

.search span {
    margin-left: 11px;
}

.penguins {
    margin: 0 4px 0 auto;
}

.task-cell {
    width: 48px;
    display: flex;
    align-items: center;
    justify-content: center;
}

.view {
    width: 51px;
    padding-right: 2px;
}

.edge {
    background-color: #344a53;
    border-bottom: 2px solid #76b5e8;
}

.firefox {
    width: 51px;
}

.notes {
    width: 40px;
    margin-left: 4px;
    border-bottom: 2px solid #76b5e8;
}

.tray {
    display: flex;
    align-items: center;
    gap: 8px;
    margin-left: auto;
}

.tray svg:first-child {
    margin-right: 4px;
}

.tray-clock {
    width: 70px;
    padding: 2px 1px 0 0;
    text-align: center;
    font-size: 12px;
    line-height: 18px;
    letter-spacing: -0.45px;
}

.action {
    margin: 12px 20px 0 8px;
}

.peek {
    width: 5px;
    border-left: 1px solid #53606a;
}
```
